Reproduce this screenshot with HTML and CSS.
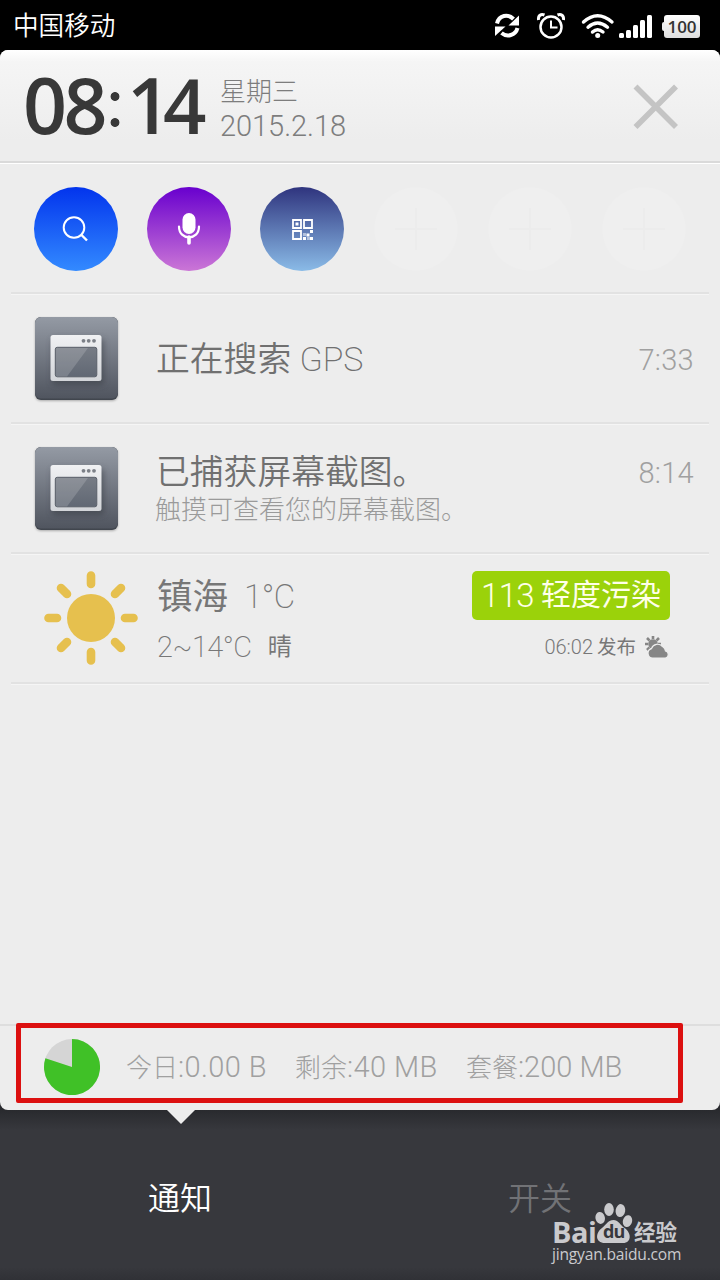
FILE: index.html
```html
<!DOCTYPE html>
<html lang="zh-CN">
<head>
<meta charset="utf-8">
<title>通知</title>
<link rel="stylesheet" href="styles.css">
</head>
<body>
<svg class="defs" width="0" height="0" aria-hidden="true">
  <defs>
    <linearGradient id="tile" x1="0" y1="0" x2="0" y2="1"><stop offset="0" stop-color="#949aa4"/><stop offset="1" stop-color="#50555f"/></linearGradient>
    <linearGradient id="frame" x1="0" y1="0" x2="0" y2="1"><stop offset="0" stop-color="#f0f1f3"/><stop offset="1" stop-color="#d3d5d9"/></linearGradient>
    <linearGradient id="glass" x1="0" y1="0" x2="0" y2="1"><stop offset="0" stop-color="#777c85"/><stop offset="1" stop-color="#616874"/></linearGradient>
    <filter id="soft" x="-30%" y="-30%" width="160%" height="160%"><feGaussianBlur stdDeviation="3"/></filter>
    <symbol id="window" viewBox="0 0 84 84">
      <rect x="1" width="83" height="83" rx="6" fill="#41464e"/>
      <rect x="1" width="83" height="81.5" rx="6" fill="url(#tile)"/>
      <rect x="18" y="22" width="52" height="46" rx="3" fill="#343941" opacity=".5" filter="url(#soft)"/>
      <rect x="16.500" y="18" width="51" height="46" rx="2.5" fill="url(#frame)"/>
      <g fill="#7c8087"><circle cx="49.500" cy="23.800" r="1.900"/><circle cx="54.700" cy="23.800" r="1.900"/><circle cx="60" cy="23.800" r="1.900"/></g>
      <rect x="21.300" y="30.300" width="41.500" height="29.500" rx="2" fill="url(#glass)" stroke="#5a606a"/>
      <path d="M22 31H54L33 59.500H22Z" fill="#fff" opacity=".16"/>
    </symbol>
  </defs>
</svg>
<div class="phone">
  <header class="status">
    <span class="carrier">中国移动</span>
    <svg class="status-icons" width="210" height="50" viewBox="0 0 210 50" fill="none" stroke="#fff">
      <path d="M7 23.500C9 15 18 13.500 23.500 19" stroke-width="4"/>
      <path d="M29 15.500V25.500H18.500Z" fill="#fff" stroke="none"/>
      <path d="M27.500 28C25.500 35.500 17 37.500 11.500 33" stroke-width="4"/>
      <path d="M5 36V26.500H15.500Z" fill="#fff" stroke="none"/>
      <circle cx="61" cy="27" r="10.500" stroke-width="2.500"/>
      <path d="M61 20.500V27.500H67.500" stroke-width="2"/>
      <path d="M48.500 20C48 15.500 51 13.500 54.500 15M73.500 20C74 15.500 71 13.500 67.500 15" stroke-width="3"/>
      <g stroke-width="3.400" stroke-linecap="round"><path d="M93.500 22Q107.500 9.500 122 22M98 27.200Q107.500 19 117.500 27.200M102.500 32Q107.500 27.500 113 32"/></g>
      <circle cx="107.700" cy="35.400" r="2.500" fill="#fff" stroke="none"/>
      <g fill="#fff" stroke="none"><rect x="129" y="33" width="5" height="5" rx="1.500"/><rect x="136" y="30" width="5" height="8" rx="1.500"/><rect x="143" y="25" width="5" height="13" rx="1.500"/><rect x="150" y="20" width="5" height="18" rx="1.500"/><rect x="157" y="15" width="5" height="23" rx="1.500"/></g>
    </svg>
    <span class="battery">100</span>
  </header>

  <main class="panel">
    <section class="top">
      <div class="clock"><span class="hh">08</span><span class="colon"></span><span class="one">1</span><span class="four">4</span></div>
      <div class="date"><span class="week">星期三</span><span class="day">2015.2.18</span></div>
      <svg class="close" width="46" height="46" viewBox="0 0 46 46"><path d="M2.500 2.500L43 43M43 2.500L2.500 43" stroke="#c4c4c4" stroke-width="5.600"/></svg>
    </section>

    <section class="shortcuts">
      <div class="disc search"><svg width="84" height="84" viewBox="0 0 84 84" fill="none" stroke="#fff"><circle cx="40" cy="40.500" r="10.300" stroke-width="2"/><path d="M47 47.500L53 53.500" stroke-width="2.400"/></svg></div>
      <div class="disc voice"><svg width="84" height="84" viewBox="0 0 84 84" fill="none" stroke="#fff"><rect x="35.500" y="26" width="13" height="21" rx="6.500" fill="#fff" stroke="none"/><path d="M32 39.500C32 54 52 54 52 39.500" stroke-width="2.200" stroke-linecap="round"/><path d="M42 50V56" stroke-width="3.600" stroke-linecap="round"/></svg></div>
      <div class="disc scan"><svg width="84" height="84" viewBox="0 0 84 84"><g fill="none" stroke="#fff" stroke-width="1.800"><path d="M33 33H41V41H33ZM44 33H52V41H44ZM33 44H41V52H33Z"/></g><path fill="#fff" d="M35.500 35.500h3v3h-3zM50 43h3v3h-3zM46.500 46.500h3v3h-3zM43 50h3v3h-3zM50 50h3v3h-3z"/><path fill="#fff" opacity=".5" d="M43 46h3v3h-3zM47 50h3v3h-3z"/></svg></div>
      <div class="disc empty"></div><div class="disc empty"></div><div class="disc empty"></div>
    </section>

    <section class="row">
      <svg class="tile" width="84" height="84"><use href="#window"/></svg>
      <div class="body"><div class="title">正在搜索 <span class="thin">GPS</span></div></div>
      <time class="time">7:33</time>
    </section>
    <section class="row">
      <svg class="tile" width="84" height="84"><use href="#window"/></svg>
      <div class="body two"><div class="title">已捕获屏幕截图。</div><div class="sub">触摸可查看您的屏幕截图。</div></div>
      <time class="time">8:14</time>
    </section>
    <section class="row weather">
      <svg class="sun" width="96" height="96" viewBox="0 0 96 96"><circle cx="48" cy="48" r="24" fill="#e6c04e"/><path d="M48 5.500V14M48 82V90.500M5.500 48H14M82 48H90.500M18 18L24 24M72 72L78 78M78 18L72 24M24 72L18 78" stroke="#e6c04e" stroke-width="8.600" stroke-linecap="round"/></svg>
      <div class="city"><div class="now"><span class="name">镇海</span><span class="deg">1°C</span></div><div class="range"><span class="temps">2~14°C</span><span class="sky">晴</span></div></div>
      <div class="air">
        <div class="badge"><span class="aqi">113</span><span class="level">轻度污染</span></div>
        <div class="pub"><span class="hour">06:02</span><span class="word">发布</span>
          <svg width="26" height="24" viewBox="0 0 26 24" fill="#868686"><circle cx="9" cy="9" r="4.800"/><path d="M9 1V4M1 9H4M3 3L5.500 5.500M15 3L12.500 5.500M3 15L5.500 12.500M17 9H14" stroke="#868686" stroke-width="2.600"/><path d="M8.500 23a4.800 4.800 0 0 1-1-9.400 6.500 6.500 0 0 1 11-2.100 6 6 0 0 1 3 4.500 3.600 3.600 0 0 1 0 7Z" stroke="#ededed" stroke-width="1.200"/></svg>
        </div>
      </div>
    </section>

    <section class="traffic">
      <svg class="pie" width="56" height="56" viewBox="0 0 56 56"><circle cx="28" cy="28" r="28" fill="#d5d5d5"/><path d="M28 28V0A28 28 0 1 1 1.400 19.300Z" fill="#40c127"/></svg>
      <span class="fig today">今日<em>:0.00 B</em></span><span class="fig left">剩余<em>:40 MB</em></span><span class="fig plan">套餐<em>:200 MB</em></span>
    </section>
    <div class="mark"></div>
    <div class="pointer"></div>
  </main>

  <nav class="tabs"><span class="tab on">通知</span><span class="tab">开关</span></nav>

  <div class="brand">
    <div class="logo"><span class="bai">Bai</span>
      <span class="paw"><svg width="38" height="42" viewBox="0 0 38 42" fill="#cacacd"><ellipse cx="5.200" cy="16" rx="4.700" ry="6" transform="rotate(-12 5 16)"/><ellipse cx="14" cy="7.500" rx="4.800" ry="6.500"/><ellipse cx="25.500" cy="8.500" rx="4.800" ry="6.500" transform="rotate(10 25 8)"/><ellipse cx="32.500" cy="19" rx="4.600" ry="6" transform="rotate(14 32 19)"/><path d="M18.500 18C23 18 25 22 28 25C37 30 37 41 28 41H10C0 41 0 31 7 26C12 22 13 18 18.500 18Z"/></svg><span class="du">du</span></span>
      <span class="exp">经验</span></div>
    <div class="url">jingyan.baidu.com</div>
  </div>
</div>
</body>
</html>
```

FILE: styles.css
```css
* { box-sizing: border-box; }
body { margin: 0; background: #000; font-family: Roboto, "Noto Sans CJK SC", sans-serif; }
.defs { position: absolute; }
.phone { position: relative; width: 720px; height: 1280px; overflow: hidden; display: flex; flex-direction: column; background: #000; white-space: nowrap; }

.status { height: 50px; flex: none; display: flex; align-items: center; padding: 0 20px 0 13px; color: #fff; }
.carrier { font-size: 25.600px; line-height: 50px; font-weight: 350; flex: 1; padding-top: 2px; }
.status-icons { margin-right: -36px; }
.battery { position: relative; width: 36px; height: 23px; margin-top: 3px; border-radius: 3px; background: linear-gradient(#fff, #dedede); color: #333; font: 600 17px/24px "Open Sans", sans-serif; text-align: center; }
.battery::before { content: ""; position: absolute; left: -2px; top: 7px; width: 3px; height: 9px; background: #eee; border-radius: 2px 0 0 2px; }

.panel { position: relative; height: 1060px; flex: none; display: flex; flex-direction: column; background: #ededed; border-radius: 8px; z-index: 1; }
.top { height: 114px; flex: none; display: flex; padding-left: 23px; border-radius: 8px 8px 0 0; background: linear-gradient(#fff 0, #f5f5f5 12px, #ededed 80%); border-bottom: 1px solid #fff; box-shadow: inset 0 -2px #dadada; }
.clock { width: 197px; display: flex; font: 600 77px/110px "Open Sans", sans-serif; color: #383838; }
.hh { width: 85px; letter-spacing: -3.500px; }
.colon { width: 18px; height: 35px; margin-top: 42px; background: radial-gradient(circle at 7px 4.500px, #383838 4px, transparent 4.800px), radial-gradient(circle at 7px 30.500px, #383838 4px, transparent 4.800px); }
.one { width: 36px; margin-left: 1px; }
.four { width: 44px; font-size: 76px; }
.date { display: flex; flex-direction: column; color: #7d7d7d; font-weight: 300; flex: 1; padding-top: 25px; }
.week { font-size: 26px; line-height: 34px; }
.day { font-size: 29px; line-height: 34px; letter-spacing: -.05px; }
.close { margin: 34px 41px 0 0; }

.shortcuts { height: 130px; flex: none; display: flex; gap: 29px; padding: 23px 34px; }
.disc { width: 84px; height: 84px; border-radius: 50%; flex: none; }
.search { background: linear-gradient(#0234ed, #338aff); }
.voice { background: linear-gradient(#6800ce, #cb76d6); }
.scan { background: linear-gradient(#2f347e, #8abbe7); }
.empty { margin-left: 1px; background: linear-gradient(#ececec, #ececec) center / 2px 42px no-repeat, linear-gradient(#ececec, #ececec) center / 42px 2px no-repeat, #efefef; }

.row { position: relative; height: 130px; flex: none; display: flex; padding: 24px 26px 0 34px; }
.row::before, .weather::after { content: ""; position: absolute; left: 11px; right: 11px; top: -2px; height: 3px; background: linear-gradient(#e2e2e2 0 2px, #f5f5f5 2px); }
.weather::after { top: 128px; }
.tile { margin-top: -1px; filter: drop-shadow(0 1px 1px #aaa); }
.body { margin-left: 38px; flex: 1; padding-top: 17px; }
.title { font-size: 33.800px; line-height: 48px; color: #707070; font-weight: 350; }
.thin { font-weight: 200; font-size: 34px; }
.two { padding-top: 3px; }
.two .title { line-height: 44px; }
.sub { font-size: 26px; line-height: 30px; color: #9a9a9a; font-weight: 300; margin-left: -1px; }
.time { font-size: 29px; line-height: 34px; color: #a0a0a0; font-weight: 300; margin-top: 25px; letter-spacing: .3px; }
.two + .time { margin-top: 8px; }

.weather { padding-top: 16px; }
.sun { margin-left: 9px; }
.city { margin-left: 18px; flex: 1; color: #777; }
.now { height: 52px; display: flex; align-items: center; }
.name { font-size: 35.500px; margin-top: -5px; }
.deg { font-size: 33px; font-weight: 200; margin-left: 16px; letter-spacing: -.5px; }
.range { height: 50px; display: flex; align-items: center; }
.temps { font-size: 29px; font-weight: 200; letter-spacing: -.5px; }
.sky { font-size: 24px; margin: -6px 0 0 16px; }
.air { display: flex; flex-direction: column; align-items: flex-end; margin-right: 24px; }
.badge { width: 198px; height: 49px; margin-top: 1px; border-radius: 5px; background: #9bd20a; color: #ffffe8; font-size: 30px; line-height: 49px; display: flex; justify-content: center; gap: 7px; }
.aqi { font-size: 33px; font-weight: 300; letter-spacing: -.6px; }
.level { line-height: 47px; }
.pub { height: 54px; display: flex; align-items: center; color: #777; }
.hour { font-size: 20px; font-weight: 300; margin-right: 4px; }
.word { font-size: 19.500px; margin: -4px 8px 0 0; }

.traffic { height: 86px; display: flex; align-items: center; margin-top: auto; padding: 0 0 2px 44px; border-top: 2px solid #dedede; border-radius: 0 0 8px 8px; color: #a0a0a0; font-weight: 300; }
.fig { font-size: 26px; line-height: 40px; padding-top: 1px; }
.fig em { font-style: normal; font-size: 29px; letter-spacing: .4px; }
.today { width: 169px; margin-left: 26px; }
.left { width: 171px; }
.plan em { letter-spacing: 0; }
.mark { position: absolute; left: 16px; top: 973px; width: 667px; height: 80px; border: 5px solid #dc1010; border-radius: 2px; }
.pointer { position: absolute; left: 167px; top: 1060px; border: 14px solid transparent; border-top-color: #ededed; border-bottom: 0; }

.tabs { flex: none; height: 178px; margin-top: -8px; padding-top: 8px; background: linear-gradient(#292a2e 8px, #37383d 28px, #37383d 165px, #303136 178px); display: flex; }
.tab { width: 360px; text-align: center; font-size: 32px; line-height: 178px; color: #717276; font-weight: 350; }
.on { color: #fff; }

.brand { position: absolute; left: 552px; top: 1202px; width: 130px; z-index: 2; color: #cacacd; }
.logo { display: flex; height: 42px; }
.bai { font: 700 29px/60px "Open Sans", sans-serif; letter-spacing: -.5px; width: 43px; }
.paw { position: relative; width: 38px; }
.du { position: absolute; left: 8px; top: 18px; font: 700 18px/22px "Open Sans", sans-serif; letter-spacing: -.8px; color: #37383d; }
.exp { font: 700 21.500px/58px "Noto Sans CJK SC", sans-serif; margin-left: 1px; }
.url { font: 500 15.600px/20px "Open Sans", sans-serif; letter-spacing: -.2px; }
```
